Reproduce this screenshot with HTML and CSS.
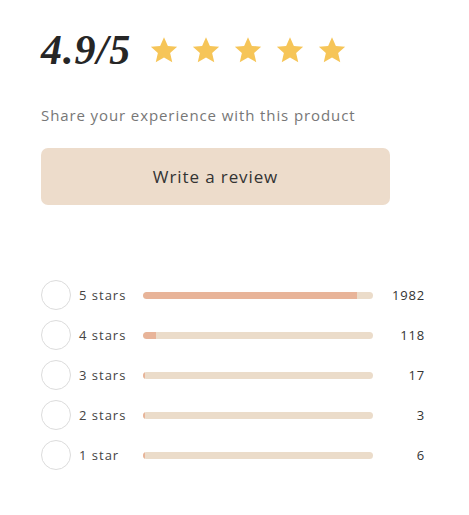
FILE: index.html
```html
<!DOCTYPE html>
<html lang="en">
<head>
<meta charset="utf-8">
<title>Reviews</title>
<link rel="stylesheet" href="styles.css">
</head>
<body>
<div class="reviews">
  <div class="summary">
    <span class="score">4.9/5</span>
    <div class="stars">
      <svg class="star" viewBox="0 0 24 24"><path d="M12 1.8l3.1 6.9 7.4.7-5.6 5 1.7 7.4L12 17.9l-6.6 3.9 1.7-7.4-5.6-5 7.4-.7z"/></svg>
      <svg class="star" viewBox="0 0 24 24"><path d="M12 1.8l3.1 6.9 7.4.7-5.6 5 1.7 7.4L12 17.9l-6.6 3.9 1.7-7.4-5.6-5 7.4-.7z"/></svg>
      <svg class="star" viewBox="0 0 24 24"><path d="M12 1.8l3.1 6.9 7.4.7-5.6 5 1.7 7.4L12 17.9l-6.6 3.9 1.7-7.4-5.6-5 7.4-.7z"/></svg>
      <svg class="star" viewBox="0 0 24 24"><path d="M12 1.8l3.1 6.9 7.4.7-5.6 5 1.7 7.4L12 17.9l-6.6 3.9 1.7-7.4-5.6-5 7.4-.7z"/></svg>
      <svg class="star" viewBox="0 0 24 24"><path d="M12 1.8l3.1 6.9 7.4.7-5.6 5 1.7 7.4L12 17.9l-6.6 3.9 1.7-7.4-5.6-5 7.4-.7z"/></svg>
    </div>
  </div>
  <p class="prompt">Share your experience with this product</p>
  <button class="write-btn">Write a review</button>

  <ul class="breakdown">
    <li class="row">
      <span class="radio"></span>
      <span class="label">5 stars</span>
      <span class="bar"><span class="fill" style="width:93.2%"></span></span>
      <span class="count">1982</span>
    </li>
    <li class="row">
      <span class="radio"></span>
      <span class="label">4 stars</span>
      <span class="bar"><span class="fill" style="width:5.5%"></span></span>
      <span class="count">118</span>
    </li>
    <li class="row">
      <span class="radio"></span>
      <span class="label">3 stars</span>
      <span class="bar"><span class="fill" style="width:0.8%"></span></span>
      <span class="count">17</span>
    </li>
    <li class="row">
      <span class="radio"></span>
      <span class="label">2 stars</span>
      <span class="bar"><span class="fill" style="width:0.14%"></span></span>
      <span class="count">3</span>
    </li>
    <li class="row">
      <span class="radio"></span>
      <span class="label">1 star</span>
      <span class="bar"><span class="fill" style="width:0.28%"></span></span>
      <span class="count">6</span>
    </li>
  </ul>
</div>
</body>
</html>
```

FILE: styles.css
```css
* { box-sizing: border-box; }

body {
  margin: 0;
  background: #fff;
  font-family: "Open Sans", "Noto Sans", sans-serif;
  color: #333;
}

.reviews {
  padding: 24px 0 0 41px;
  width: 440px;
}

.summary {
  display: flex;
  align-items: center;
  gap: 18px;
  height: 52px;
}

.score {
  font-family: "Liberation Serif", "Times New Roman", serif;
  font-style: italic;
  font-weight: bold;
  font-size: 42px;
  line-height: 52px;
  color: #262626;
  letter-spacing: 1px;
}

.stars {
  display: flex;
  gap: 12px;
}

.star {
  width: 30px;
  height: 30px;
  fill: #F6C558;
}

.prompt {
  margin: 29px 0 0;
  font-size: 15px;
  line-height: 20px;
  color: #777;
  letter-spacing: 0.9px;
}

.write-btn {
  display: block;
  margin-top: 23px;
  width: 349px;
  height: 57px;
  border: 0;
  border-radius: 7px;
  background: #EDDCCB;
  font-family: inherit;
  font-size: 17px;
  color: #333;
  letter-spacing: 0.9px;
  padding: 0;
}

.breakdown {
  list-style: none;
  margin: 70px 0 0;
  padding: 0;
}

.row {
  display: grid;
  grid-template-columns: 30px 72px 230px 52px;
  align-items: center;
  height: 40px;
}

.radio {
  width: 30px;
  height: 30px;
  border: 1px solid #dcdcdc;
  border-radius: 50%;
}

.label {
  padding-left: 8px;
  font-size: 13px;
  color: #444;
  letter-spacing: 1px;
}

.bar {
  display: block;
  height: 7px;
  border-radius: 4px;
  background: #EBDCCA;
  overflow: hidden;
}

.fill {
  display: block;
  height: 100%;
  min-width: 2px;
  background: #E8B499;
  border-radius: 4px 0 0 4px;
}

.count {
  text-align: right;
  font-size: 13px;
  color: #333;
  letter-spacing: 0.8px;
}
```
